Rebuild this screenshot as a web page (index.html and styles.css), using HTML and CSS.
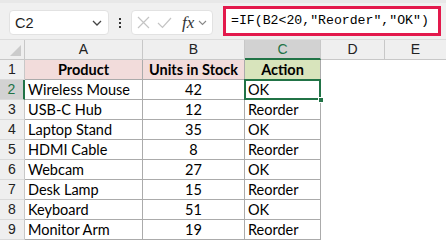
FILE: index.html
```html
<!DOCTYPE html>
<html lang="en">
<head>
    <meta charset="UTF-8">
    <title>IF formula - Reorder</title>
    <link rel="stylesheet" href="styles.css">
</head>
<body>
    <div class="window">
        <div class="toolbar">
            <div class="name-box">
                <span class="name-text">C2</span>
                <svg class="chev" width="10" height="6" viewBox="0 0 10 6"><path d="M1 1 L5 5 L9 1" fill="none" stroke="#444" stroke-width="1.3"/></svg>
            </div>
            <div class="dots"><span></span><span></span><span></span></div>
            <div class="fx-buttons">
                <svg width="13" height="13" viewBox="0 0 13 13"><path d="M1 1 L12 12 M12 1 L1 12" stroke="#c4c4c4" stroke-width="1.2"/></svg>
                <svg width="15" height="12" viewBox="0 0 15 12"><path d="M1 6 L5.5 10.5 L14 1" fill="none" stroke="#c4c4c4" stroke-width="1.2"/></svg>
                <span class="fx">fx</span>
                <svg width="9" height="6" viewBox="0 0 9 6"><path d="M1 1 L4.5 4.5 L8 1" fill="none" stroke="#888" stroke-width="1.1"/></svg>
            </div>
            <div class="formula">=IF(B2&lt;20,"Reorder","OK")</div>
        </div>
        <div class="sheet">
            <div class="corner"><span class="tri"></span></div>
            <div class="col-head">A</div>
            <div class="col-head">B</div>
            <div class="col-head active">C</div>
            <div class="col-head">D</div>
            <div class="col-head last">E</div>

            <div class="row-head">1</div>
            <div class="cell th pink">Product</div>
            <div class="cell th pink">Units in Stock</div>
            <div class="cell th green">Action</div>
            <div class="blank"></div>
            <div class="blank"></div>

            <div class="row-head active">2</div>
            <div class="cell">Wireless Mouse</div>
            <div class="cell num">42</div>
            <div class="cell selected">OK<span class="handle"></span></div>
            <div class="blank"></div>
            <div class="blank"></div>

            <div class="row-head">3</div>
            <div class="cell">USB-C Hub</div>
            <div class="cell num">12</div>
            <div class="cell">Reorder</div>
            <div class="blank"></div>
            <div class="blank"></div>

            <div class="row-head">4</div>
            <div class="cell">Laptop Stand</div>
            <div class="cell num">35</div>
            <div class="cell">OK</div>
            <div class="blank"></div>
            <div class="blank"></div>

            <div class="row-head">5</div>
            <div class="cell">HDMI Cable</div>
            <div class="cell num">8</div>
            <div class="cell">Reorder</div>
            <div class="blank"></div>
            <div class="blank"></div>

            <div class="row-head">6</div>
            <div class="cell">Webcam</div>
            <div class="cell num">27</div>
            <div class="cell">OK</div>
            <div class="blank"></div>
            <div class="blank"></div>

            <div class="row-head">7</div>
            <div class="cell">Desk Lamp</div>
            <div class="cell num">15</div>
            <div class="cell">Reorder</div>
            <div class="blank"></div>
            <div class="blank"></div>

            <div class="row-head">8</div>
            <div class="cell">Keyboard</div>
            <div class="cell num">51</div>
            <div class="cell">OK</div>
            <div class="blank"></div>
            <div class="blank"></div>

            <div class="row-head">9</div>
            <div class="cell">Monitor Arm</div>
            <div class="cell num">19</div>
            <div class="cell">Reorder</div>
            <div class="blank"></div>
            <div class="blank"></div>
        </div>
    </div>
</body>
</html>
```

FILE: styles.css
```css
* {
    box-sizing: border-box;
}
body {
    margin: 0;
    background: #ffffff;
    font-family: 'Lato', 'Liberation Sans', sans-serif;
    color: #000;
}
.window {
    width: 446px;
    height: 242px;
    overflow: hidden;
}
.toolbar {
    height: 40px;
    background: #f0f0f0;
    border-top: 3px solid #e8e8e8;
    border-bottom: 1px solid #dcdcdc;
    display: flex;
    align-items: center;
    padding-left: 9px;
}
.name-box {
    width: 100px;
    height: 25px;
    background: #fff;
    border: 1px solid #e2e2e2;
    border-radius: 4px;
    display: flex;
    align-items: center;
    justify-content: space-between;
    padding: 0 6px 0 5px;
    margin-top: 3px;
}
.name-text {
    font-family: 'Liberation Sans', sans-serif;
    font-size: 14.5px;
    color: #1e1e1e;
}
.dots {
    width: 22px;
    display: flex;
    flex-direction: column;
    align-items: center;
    gap: 2px;
    margin-top: 3px;
}
.dots span {
    width: 2px;
    height: 2px;
    background: #333;
}
.fx-buttons {
    width: 82px;
    height: 25px;
    background: #fff;
    border: 1px solid #e2e2e2;
    border-radius: 4px;
    display: flex;
    align-items: center;
    gap: 7px;
    padding-left: 5px;
    margin-top: 3px;
}
.fx {
    font-family: 'Liberation Serif', serif;
    font-style: italic;
    font-size: 17px;
    color: #333;
    margin-left: 3px;
    margin-right: -3px;
}
.formula {
    margin-left: 10px;
    width: 218px;
    height: 30px;
    border: 3px solid #e3194c;
    background: #fff;
    font-family: 'Liberation Mono', monospace;
    font-size: 13.2px;
    line-height: 24px;
    padding-left: 5px;
    white-space: nowrap;
}
.sheet {
    display: grid;
    grid-template-columns: 25px 118px 102px 76px 64px 61px;
    grid-auto-rows: 20px;
    font-size: 14.5px;
}
.corner {
    background: #efefef;
    border-right: 1px solid #c8c8c8;
    border-bottom: 1px solid #c8c8c8;
    position: relative;
}
.tri {
    position: absolute;
    right: 3px;
    bottom: 3px;
    width: 0;
    height: 0;
    border-left: 11px solid transparent;
    border-bottom: 11px solid #cbcbcb;
}
.col-head {
    background: #efefef;
    border-right: 1px solid #c8c8c8;
    border-bottom: 1px solid #c8c8c8;
    text-align: center;
    line-height: 19px;
    font-family: 'Liberation Sans', sans-serif;
    font-size: 14px;
    color: #222;
}
.col-head.active {
    background: #d2d2d2;
    color: #217346;
    border-bottom: 2px solid #217346;
}
.col-head.last {
    border-right: none;
}
.row-head {
    background: #efefef;
    border-right: 1px solid #c8c8c8;
    border-bottom: 1px solid #dadada;
    text-align: center;
    line-height: 19px;
    font-family: 'Liberation Sans', sans-serif;
    font-size: 14px;
    color: #222;
}
.row-head.active {
    background: #d2d2d2;
    color: #217346;
    border-right: 2px solid #217346;
}
.cell {
    border-right: 1px solid #ababab;
    border-bottom: 1px solid #ababab;
    padding-left: 3px;
    line-height: 19px;
    white-space: nowrap;
}
.cell.th {
    font-weight: bold;
    text-align: center;
    padding-left: 0;
}
.cell.pink {
    background: #f2dcdb;
}
.cell.green {
    background: #d8e4bc;
}
.cell.num {
    text-align: center;
    padding-left: 0;
}
.selected {
    position: relative;
}
.selected::after {
    content: "";
    position: absolute;
    left: -1px;
    top: -1px;
    right: -1px;
    bottom: -1px;
    border: 2px solid #217346;
}
.handle {
    position: absolute;
    right: -4px;
    bottom: -4px;
    width: 6px;
    height: 6px;
    background: #217346;
    border: 1px solid #fff;
    z-index: 1;
}
.blank {
    background: #fff;
}
```
